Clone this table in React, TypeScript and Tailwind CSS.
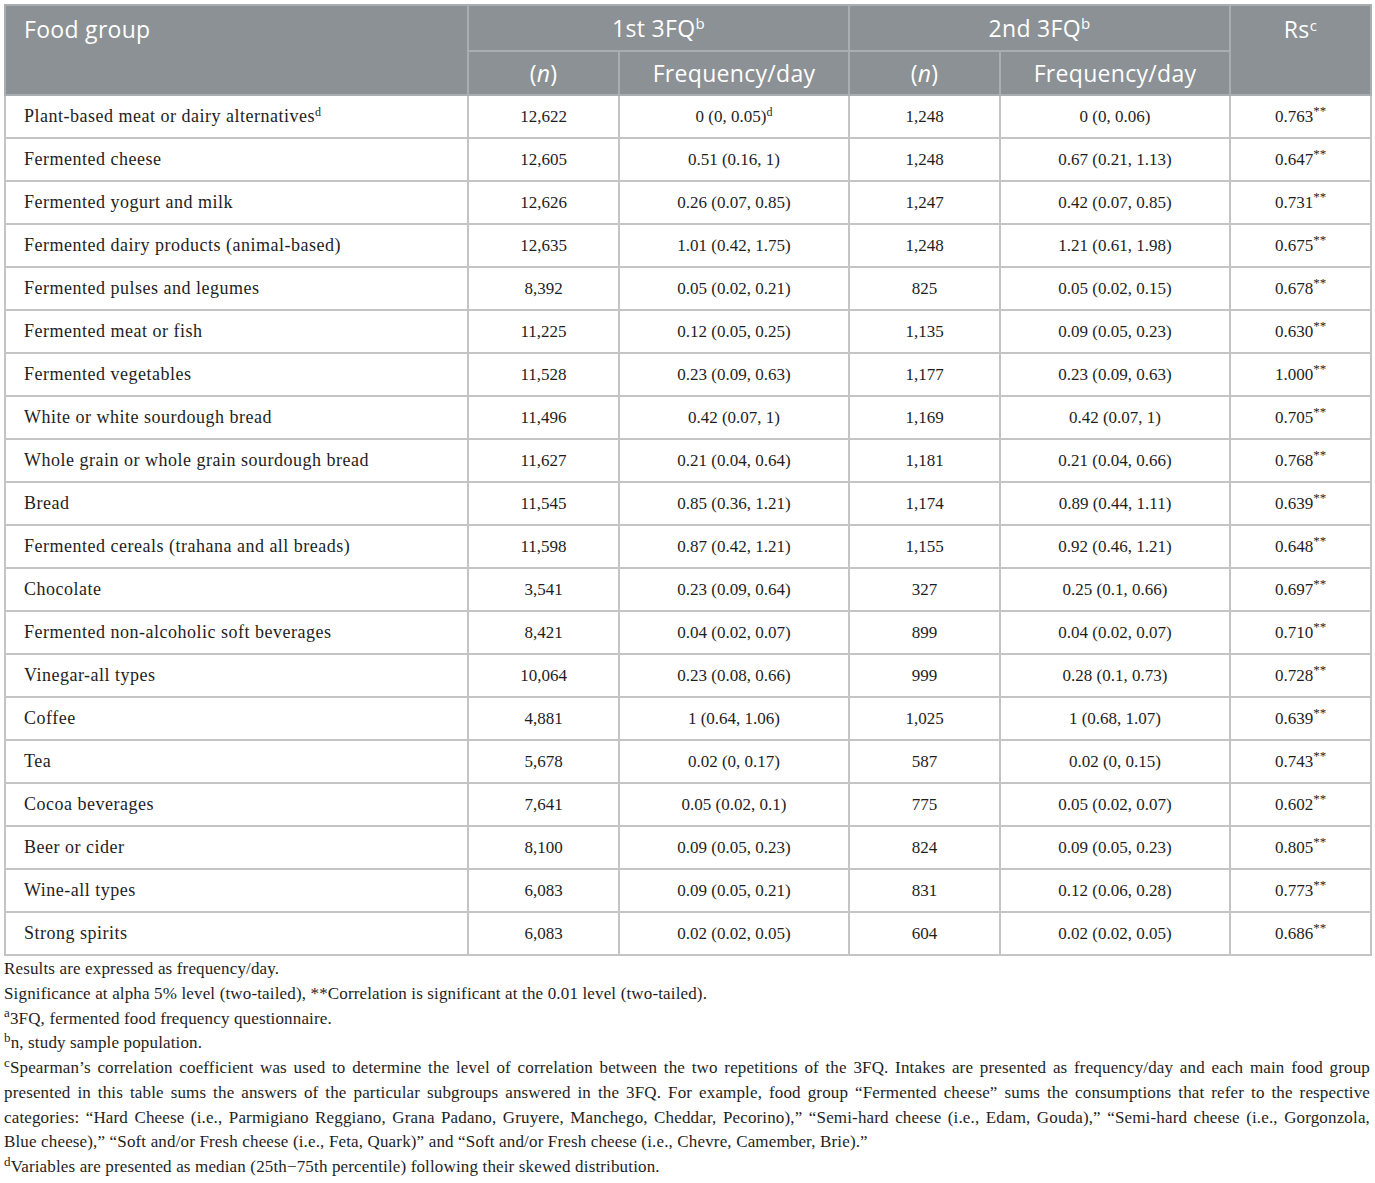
const rows: [string, string, string, string, string, string, boolean?][] = [
  ['Plant-based meat or dairy alternatives', '12,622', '0 (0, 0.05)', '1,248', '0 (0, 0.06)', '0.763', true],
  ['Fermented cheese', '12,605', '0.51 (0.16, 1)', '1,248', '0.67 (0.21, 1.13)', '0.647'],
  ['Fermented yogurt and milk', '12,626', '0.26 (0.07, 0.85)', '1,247', '0.42 (0.07, 0.85)', '0.731'],
  ['Fermented dairy products (animal-based)', '12,635', '1.01 (0.42, 1.75)', '1,248', '1.21 (0.61, 1.98)', '0.675'],
  ['Fermented pulses and legumes', '8,392', '0.05 (0.02, 0.21)', '825', '0.05 (0.02, 0.15)', '0.678'],
  ['Fermented meat or fish', '11,225', '0.12 (0.05, 0.25)', '1,135', '0.09 (0.05, 0.23)', '0.630'],
  ['Fermented vegetables', '11,528', '0.23 (0.09, 0.63)', '1,177', '0.23 (0.09, 0.63)', '1.000'],
  ['White or white sourdough bread', '11,496', '0.42 (0.07, 1)', '1,169', '0.42 (0.07, 1)', '0.705'],
  ['Whole grain or whole grain sourdough bread', '11,627', '0.21 (0.04, 0.64)', '1,181', '0.21 (0.04, 0.66)', '0.768'],
  ['Bread', '11,545', '0.85 (0.36, 1.21)', '1,174', '0.89 (0.44, 1.11)', '0.639'],
  ['Fermented cereals (trahana and all breads)', '11,598', '0.87 (0.42, 1.21)', '1,155', '0.92 (0.46, 1.21)', '0.648'],
  ['Chocolate', '3,541', '0.23 (0.09, 0.64)', '327', '0.25 (0.1, 0.66)', '0.697'],
  ['Fermented non-alcoholic soft beverages', '8,421', '0.04 (0.02, 0.07)', '899', '0.04 (0.02, 0.07)', '0.710'],
  ['Vinegar-all types', '10,064', '0.23 (0.08, 0.66)', '999', '0.28 (0.1, 0.73)', '0.728'],
  ['Coffee', '4,881', '1 (0.64, 1.06)', '1,025', '1 (0.68, 1.07)', '0.639'],
  ['Tea', '5,678', '0.02 (0, 0.17)', '587', '0.02 (0, 0.15)', '0.743'],
  ['Cocoa beverages', '7,641', '0.05 (0.02, 0.1)', '775', '0.05 (0.02, 0.07)', '0.602'],
  ['Beer or cider', '8,100', '0.09 (0.05, 0.23)', '824', '0.09 (0.05, 0.23)', '0.805'],
  ['Wine-all types', '6,083', '0.09 (0.05, 0.21)', '831', '0.12 (0.06, 0.28)', '0.773'],
  ['Strong spirits', '6,083', '0.02 (0.02, 0.05)', '604', '0.02 (0.02, 0.05)', '0.686'],
];

const serif = "font-['Liberation_Serif',serif]";
const th = 'border-2 border-[#a9aeb0] font-normal';
const td = 'border-2 border-[#c4c4c4] h-[43px] text-center';
const line = 'block whitespace-nowrap text-justify [text-align-last:justify]';

export default function App() {
  return (
    <div className="w-[1375px] bg-white pt-[4px] pl-[4px] pr-[5px] text-[#1e1e1e]">
      <table className="w-[1366px] border-collapse table-fixed border-2 border-[#c4c4c4]">
        <colgroup>
          <col className="w-[463px]" />
          <col className="w-[151px]" />
          <col className="w-[230px]" />
          <col className="w-[151px]" />
          <col className="w-[230px]" />
          <col className="w-[141px]" />
        </colgroup>
        <thead className="bg-[#8b9194] text-white font-['Open_Sans',sans-serif] text-[23px] tracking-[0.3px]">
          <tr className="h-[46px]">
            <th rowSpan={2} className={`${th} text-left align-top pl-[18px] pt-[6px]`}>Food group</th>
            <th colSpan={2} className={`${th} text-center`}>
              1st 3FQ<sup className="text-[15px]">b</sup>
            </th>
            <th colSpan={2} className={`${th} text-center`}>
              2nd 3FQ<sup className="text-[15px]">b</sup>
            </th>
            <th rowSpan={2} className={`${th} text-center align-top pt-[6px]`}>
              Rs<sup className="text-[15px]">c</sup>
            </th>
          </tr>
          <tr className="h-[44px]">
            <th className={th}>(<i>n</i>)</th>
            <th className={th}>Frequency/day</th>
            <th className={th}>(<i>n</i>)</th>
            <th className={th}>Frequency/day</th>
          </tr>
        </thead>
        <tbody className={`${serif} text-[17px]`}>
          {rows.map(([name, n1, f1, n2, f2, rs, sup]) => (
            <tr key={name}>
              <td className={`${td} text-left pl-[18px] text-[18px] tracking-[0.5px]`}>
                {name}
                {sup && <sup className="text-[12px]">d</sup>}
              </td>
              <td className={td}>{n1}</td>
              <td className={td}>
                {f1}
                {sup && <sup className="text-[12px]">d</sup>}
              </td>
              <td className={td}>{n2}</td>
              <td className={td}>{f2}</td>
              <td className={td}>
                {rs}
                <sup className="text-[13px]">**</sup>
              </td>
            </tr>
          ))}
        </tbody>
      </table>
      <div className={`${serif} text-[17px] tracking-[0.15px] leading-[24.75px] mt-[1px] pb-[10px] w-[1366px]`}>
        <p>Results are expressed as frequency/day.</p>
        <p>Significance at alpha 5% level (two-tailed), **Correlation is significant at the 0.01 level (two-tailed).</p>
        <p>
          <sup className="text-[13px]">a</sup>3FQ, fermented food frequency questionnaire.
        </p>
        <p>
          <sup className="text-[13px]">b</sup>n, study sample population.
        </p>
        <p>
          <span className={line}>
            <sup className="text-[13px]">c</sup>Spearman’s correlation coefficient was used to determine the level of
            correlation between the two repetitions of the 3FQ. Intakes are presented as frequency/day and each main
            food group
          </span>
          <span className={line}>
            presented in this table sums the answers of the particular subgroups answered in the 3FQ. For example, food
            group “Fermented cheese” sums the consumptions that refer to the respective
          </span>
          <span className={line}>
            categories: “Hard Cheese (i.e., Parmigiano Reggiano, Grana Padano, Gruyere, Manchego, Cheddar, Pecorino),”
            “Semi-hard cheese (i.e., Edam, Gouda),” “Semi-hard cheese (i.e., Gorgonzola,
          </span>
          <span className="block">
            Blue cheese),” “Soft and/or Fresh cheese (i.e., Feta, Quark)” and “Soft and/or Fresh cheese (i.e., Chevre,
            Camember, Brie).”
          </span>
        </p>
        <p>
          <sup className="text-[13px]">d</sup>Variables are presented as median (25th−75th percentile) following their
          skewed distribution.
        </p>
      </div>
    </div>
  );
}
